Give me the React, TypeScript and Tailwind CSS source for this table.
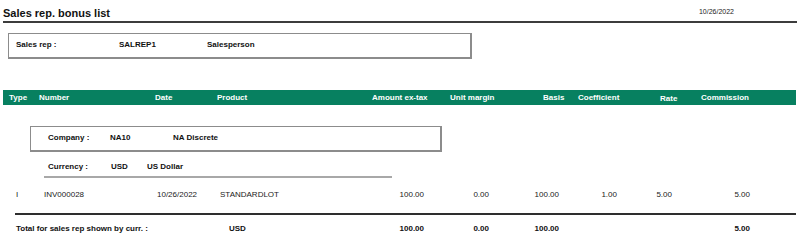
const headers = [
  { label: 'Type', w: 'w-[30px]' },
  { label: 'Number', w: 'w-[116px]' },
  { label: 'Date', w: 'w-[62px]' },
  { label: 'Product', w: 'w-[155px]' },
  { label: 'Amount ex-tax', w: 'w-[78px]' },
  { label: 'Unit margin', w: 'w-[93px]' },
  { label: 'Basis', w: 'w-[35px]' },
  { label: 'Coefficient', w: 'w-[82px]' },
  { label: 'Rate', w: 'w-[41px] pt-[2px]' },
  { label: 'Commission', w: 'flex-1' },
];

// right-aligned numeric columns, shared by the detail and total lines
const numCols = ['w-[54px]', 'w-[65px]', 'w-[70px]', 'w-[58px]', 'w-[55px]', 'w-[78px]'];

const NumCells = ({ values, bold }: { values: string[]; bold?: boolean }) => (
  <>
    {numCols.map((w, i) => (
      <div key={i} className={`${w} text-right ${bold ? 'font-bold' : ''}`}>
        {values[i]}
      </div>
    ))}
  </>
);

export default function App() {
  return (
    <div className="w-[800px] h-[252px] bg-white px-[3px] font-['Liberation_Sans',Arial,sans-serif] text-[8px] leading-[10px] text-[#111] overflow-hidden">
      {/* Title */}
      <div className="flex items-start h-[23px] border-b-2 border-[#3c3c3c]">
        <h1 className="pt-[7px] text-[11px] leading-[13px] font-bold">Sales rep. bonus list</h1>
        <div className="ml-auto mr-[63px] pt-[8px] text-[7px] leading-[8px] text-[#222]">10/26/2022</div>
      </div>

      {/* Sales rep box */}
      <div className="mt-[10px] ml-[5px] w-[464px] h-[26px] border border-r-2 border-b-2 border-[#8c8c8c] pl-[7px] pt-[6px] flex font-bold">
        <div className="w-[103px]">Sales rep :</div>
        <div className="w-[88px]">SALREP1</div>
        <div>Salesperson</div>
      </div>

      {/* Column header bar */}
      <div className="mt-[31px] mr-[1px] h-[15px] bg-[#078060] flex items-center pl-[6px] text-white font-bold">
        {headers.map((h) => (
          <div key={h.label} className={h.w}>
            {h.label}
          </div>
        ))}
      </div>

      {/* Company box */}
      <div className="mt-[21px] ml-[27px] w-[412px] h-[26px] border border-r-2 border-b-2 border-[#8c8c8c] pl-[17px] pt-[6px] flex font-bold">
        <div className="w-[62px]">Company :</div>
        <div className="w-[63px]">NA10</div>
        <div>NA Discrete</div>
      </div>

      {/* Currency */}
      <div className="mt-[10px] ml-[41px] w-[348px] pb-[4px] pl-[4px] border-b-2 border-[#a8a8a8] flex font-bold">
        <div className="w-[63px]">Currency :</div>
        <div className="w-[36px]">USD</div>
        <div>US Dollar</div>
      </div>

      {/* Detail line */}
      <div className="mt-[12px] pl-[13px] flex text-[#222]">
        <div className="w-[28px]">I</div>
        <div className="w-[113px]">INV000028</div>
        <div className="w-[63px]">10/26/2022</div>
        <div className="w-[150px]">STANDARDLOT</div>
        <NumCells values={['100.00', '0.00', '100.00', '1.00', '5.00', '5.00']} />
      </div>

      <div className="mt-[13px] ml-[12px] mr-[1px] border-t-2 border-[#2e2e2e]" />

      {/* Totals */}
      <div className="mt-[9px] pl-[13px] flex font-bold">
        <div className="w-[213px]">Total for sales rep shown by curr. :</div>
        <div className="w-[141px]">USD</div>
        <NumCells bold values={['100.00', '0.00', '100.00', '', '', '5.00']} />
      </div>
    </div>
  );
}
